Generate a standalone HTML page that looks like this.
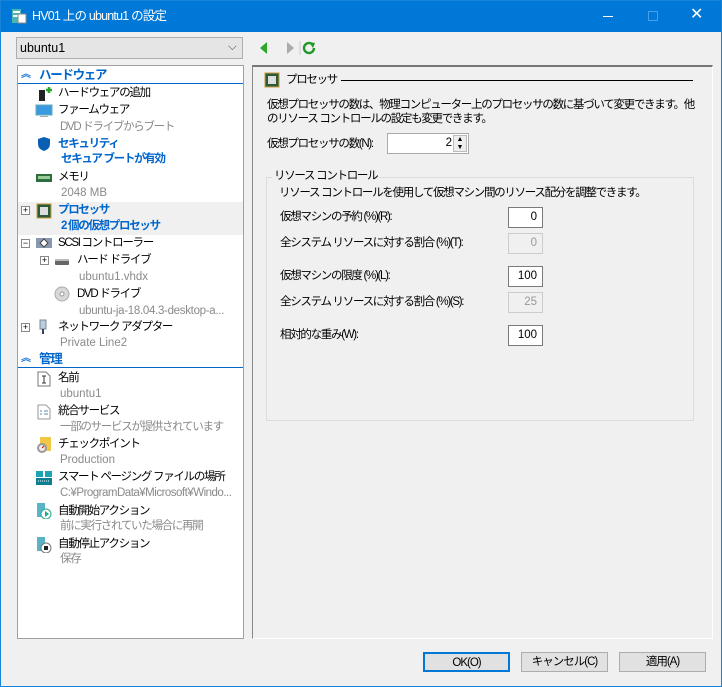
<!DOCTYPE html>
<html><head><meta charset="utf-8"><style>
*{box-sizing:border-box;margin:0;padding:0}
body{width:722px;height:687px;overflow:hidden;background:#fff;font-family:"Liberation Sans","Noto Sans CJK JP",sans-serif;font-size:11.5px;color:#000}
.win{position:absolute;left:0;top:0;width:722px;height:687px;background:#f0f0f0;border:1px solid #1883d7;overflow:hidden}
.tb{position:absolute;left:0;top:0;width:722px;height:31px;background:#0078d7;color:#fff}
.a{position:absolute;white-space:nowrap;line-height:16px;letter-spacing:-1.3px}
.l{letter-spacing:0}
.g{color:#8a8a8a}
.b{color:#0066cc;font-weight:bold}
.box{position:absolute;background:#fff;border:1px solid #7a7a7a;text-align:right;padding-right:5px;line-height:18px}
.dis{background:#f0f0f0;border-color:#ccc;color:#999}
.btn{position:absolute;top:651px;width:87px;height:20px;background:#e1e1e1;border:1px solid #adadad;text-align:center;line-height:18px;letter-spacing:-1px}
.pl{position:absolute;width:9px;height:9px;border:1px solid #888;background:#fff;font-size:9px;line-height:7px;text-align:center;color:#000}
</style></head><body>
<div class="win">
<div class="tb">
 <svg style="position:absolute;left:10px;top:7px" width="16" height="16"><rect x="1" y="1" width="9" height="14" fill="#4ab7b0"/><rect x="2" y="3" width="7" height="2" fill="#fff"/><rect x="2" y="7" width="7" height="2" fill="#fff"/><rect x="7" y="6" width="8" height="9" fill="#fff" stroke="#888"/></svg>
 <div class="a" style="left:31px;top:7px;font-size:12.5px;color:#fff;letter-spacing:-0.8px">HV01 上の ubuntu1 の設定</div>
 <div style="position:absolute;left:602px;top:15px;width:10px;height:1px;background:#fff"></div>
 <div style="position:absolute;left:647px;top:10px;width:10px;height:10px;border:1px solid #4aa0e8"></div>
 <div class="a" style="left:689px;top:6px;font-size:16px;color:#fff;letter-spacing:0">✕</div>
</div>
<div style="position:absolute;left:15px;top:36px;width:227px;height:22px;background:#e5e5e5;border:1px solid #adadad"></div>
<div class="a l" style="left:19px;top:39px;font-size:12.5px">ubuntu1</div>
<div class="a l" style="left:227px;top:38px;color:#555">⌵</div>
<svg style="position:absolute;left:256px;top:40px" width="60" height="14"><path d="M3 7 L10 1 L10 13Z" fill="#2aa82a"/><path d="M30 1 L37 7 L30 13Z" fill="#aaa"/><line x1="43" y1="0" x2="43" y2="14" stroke="#ccc"/><path d="M57 7 A5 5 0 1 1 55 3" fill="none" stroke="#1e9a28" stroke-width="2.4"/><path d="M52 1 L58 2 L56 7Z" fill="#1e9a28"/></svg>

<div style="position:absolute;left:16px;top:64px;width:227px;height:574px;background:#fff;border:1px solid #a0a0a0"></div>
<div style="position:absolute;left:17px;top:201px;width:225px;height:33px;background:#f0f0f0"></div>
<div style="position:absolute;left:17px;top:82px;width:225px;height:1px;background:#0066cc"></div>
<div style="position:absolute;left:17px;top:366px;width:225px;height:1px;background:#0066cc"></div>
<div class="a b" style="left:20px;top:66px;font-size:10px">︽</div><div class="a b" style="left:38px;top:66px;font-size:12.5px">ハードウェア</div>
<svg style="position:absolute;left:37px;top:85px" width="14" height="16"><rect x="1" y="4" width="6" height="11" fill="#222"/><path d="M8 4h6M11 1v6" stroke="#2aa82a" stroke-width="2.5"/></svg>
<div class="a" style="left:57px;top:84px">ハードウェアの追加</div>
<svg style="position:absolute;left:34px;top:103px" width="18" height="14"><rect x="1" y="1" width="16" height="10" fill="#3a9ae0" stroke="#6ab"/><rect x="5" y="12" width="8" height="1" fill="#aaa"/></svg>
<div class="a" style="left:57px;top:101px">ファームウェア</div>
<div class="a g" style="left:59px;top:118px">DVD ドライブからブート</div>
<svg style="position:absolute;left:36px;top:135px" width="14" height="16"><path d="M7 1 L13 3 V8 Q13 13 7 15 Q1 13 1 8 V3Z" fill="#0a5fb4"/></svg>
<div class="a b" style="left:57px;top:135px">セキュリティ</div>
<div class="a b" style="left:60px;top:150px">セキュア ブートが有効</div>
<svg style="position:absolute;left:35px;top:172px" width="16" height="10"><rect x="0" y="1" width="16" height="8" fill="#2e6e3e"/><rect x="2" y="3" width="12" height="3" fill="#9c9"/></svg>
<div class="a" style="left:57px;top:168px">メモリ</div>
<div class="a g l" style="left:60px;top:184px">2048 MB</div>
<div class="pl" style="left:20px;top:205px">+</div>
<svg style="position:absolute;left:35px;top:202px" width="16" height="16"><rect x="1" y="1" width="14" height="14" fill="#2c5a3a" stroke="#c9a13b"/><rect x="4" y="4" width="8" height="8" fill="#ddd"/></svg>
<div class="a b" style="left:57px;top:201px">プロセッサ</div>
<div class="a b" style="left:60px;top:217px">2 個の仮想プロセッサ</div>
<div class="pl" style="left:20px;top:238px">−</div>
<svg style="position:absolute;left:35px;top:235px" width="16" height="14"><rect x="0" y="2" width="16" height="10" fill="#8a99b0"/><path d="M4 7 L8 3 L12 7 L8 11Z" fill="#fff" stroke="#444"/></svg>
<div class="a" style="left:57px;top:234px">SCSI コントローラー</div>
<div class="pl" style="left:39px;top:255px">+</div>
<svg style="position:absolute;left:53px;top:256px" width="16" height="10"><rect x="1" y="2" width="14" height="6" rx="1" fill="#666"/><rect x="1" y="2" width="14" height="2" fill="#bbb"/></svg>
<div class="a" style="left:76px;top:251px">ハード ドライブ</div>
<div class="a g l" style="left:78px;top:268px">ubuntu1.vhdx</div>
<svg style="position:absolute;left:53px;top:285px" width="16" height="16"><circle cx="8" cy="8" r="7" fill="#d8d8d8" stroke="#aaa"/><circle cx="8" cy="8" r="2" fill="#fff" stroke="#999"/></svg>
<div class="a" style="left:76px;top:285px">DVD ドライブ</div>
<div class="a g" style="left:78px;top:302px;letter-spacing:-0.3px">ubuntu-ja-18.04.3-desktop-a...</div>
<div class="pl" style="left:20px;top:322px">+</div>
<svg style="position:absolute;left:37px;top:318px" width="10" height="16"><rect x="2" y="1" width="6" height="9" fill="#bcd" stroke="#789"/><rect x="4" y="10" width="2" height="5" fill="#345"/></svg>
<div class="a" style="left:57px;top:318px">ネットワーク アダプター</div>
<div class="a g l" style="left:59px;top:334px">Private Line2</div>
<div class="a b" style="left:20px;top:350px;font-size:10px">︽</div><div class="a b" style="left:38px;top:350px;font-size:12.5px">管理</div>
<svg style="position:absolute;left:36px;top:370px" width="14" height="16"><path d="M1 1h8l4 4v10H1Z" fill="#fff" stroke="#777"/><path d="M5 5h4M7 5v7M5 12h4" stroke="#333"/></svg>
<div class="a" style="left:57px;top:369px">名前</div>
<div class="a g l" style="left:59px;top:385px">ubuntu1</div>
<svg style="position:absolute;left:36px;top:403px" width="14" height="16"><path d="M1 1h8l4 4v10H1Z" fill="#fff" stroke="#999"/><path d="M3 7h2M3 10h2M7 7h4M7 10h4" stroke="#58a"/></svg>
<div class="a" style="left:57px;top:402px">統合サービス</div>
<div class="a g" style="left:59px;top:418px">一部のサービスが提供されています</div>
<svg style="position:absolute;left:35px;top:436px" width="16" height="16"><rect x="4" y="0" width="11" height="14" fill="#f2c744"/><circle cx="6" cy="11" r="5" fill="#999"/><circle cx="6" cy="11" r="3" fill="#eee"/><path d="M6 11 L8 9" stroke="#c00"/></svg>
<div class="a" style="left:57px;top:435px">チェックポイント</div>
<div class="a g l" style="left:59px;top:451px">Production</div>
<svg style="position:absolute;left:35px;top:469px" width="16" height="16"><rect x="0" y="1" width="7" height="6" fill="#1ca3b8"/><rect x="9" y="1" width="7" height="6" fill="#1ca3b8"/><rect x="0" y="8" width="16" height="7" fill="#0d7f95"/><path d="M2 11h12" stroke="#fff" stroke-dasharray="1 1"/></svg>
<div class="a" style="left:57px;top:468px">スマート ページング ファイルの場所</div>
<div class="a g" style="left:59px;top:484px;letter-spacing:-0.5px">C:¥ProgramData¥Microsoft¥Windo...</div>
<svg style="position:absolute;left:35px;top:502px" width="16" height="16"><rect x="1" y="0" width="8" height="14" fill="#5ab4c8"/><circle cx="10" cy="11" r="5" fill="#fff" stroke="#2a8"/><path d="M9 8 L13 11 L9 14Z" fill="#2a8"/></svg>
<div class="a" style="left:57px;top:502px">自動開始アクション</div>
<div class="a g" style="left:59px;top:517px">前に実行されていた場合に再開</div>
<svg style="position:absolute;left:35px;top:536px" width="16" height="16"><rect x="1" y="0" width="8" height="14" fill="#5ab4c8"/><circle cx="10" cy="11" r="5" fill="#fff" stroke="#777"/><rect x="8" y="9" width="4" height="4" fill="#222"/></svg>
<div class="a" style="left:57px;top:535px">自動停止アクション</div>
<div class="a g" style="left:59px;top:550px">保存</div>

<div style="position:absolute;left:251px;top:64px;width:461px;height:574px;border:1px solid #fff;border-top:2px solid #777;border-left:1px solid #888"></div>
<svg style="position:absolute;left:263px;top:71px" width="16" height="16"><rect x="1" y="1" width="14" height="14" fill="#2c5a3a" stroke="#c9a13b"/><rect x="4" y="4" width="8" height="8" fill="#ddd"/></svg>
<div class="a" style="left:285px;top:71px">プロセッサ</div>
<div style="position:absolute;left:340px;top:79px;width:352px;height:1px;background:#000"></div>
<div class="a" style="left:266px;top:96px">仮想プロセッサの数は、物理コンピューター上のプロセッサの数に基づいて変更できます。他</div>
<div class="a" style="left:266px;top:110px">のリソース コントロールの設定も変更できます。</div>
<div class="a" style="left:266px;top:135px">仮想プロセッサの数(N):</div>
<div class="box" style="left:386px;top:132px;width:82px;height:21px;border-color:#aaa;padding-right:16px">2</div>
<div style="position:absolute;left:452px;top:134px;width:14px;height:17px;background:#eee;border:1px solid #bbb;font-size:7px;line-height:8px;text-align:center">▲<br>▼</div>
<div style="position:absolute;left:265px;top:176px;width:428px;height:244px;border:1px solid #dcdcdc"></div>
<div class="a" style="left:271px;top:167px;background:#f0f0f0;padding:0 2px">リソース コントロール</div>
<div class="a" style="left:278px;top:184px">リソース コントロールを使用して仮想マシン間のリソース配分を調整できます。</div>
<div class="a" style="left:279px;top:208px">仮想マシンの予約 (%)(R):</div>
<div class="box" style="left:507px;top:206px;width:35px;height:21px">0</div>
<div class="a" style="left:279px;top:234px">全システム リソースに対する割合 (%)(T):</div>
<div class="box dis" style="left:507px;top:232px;width:35px;height:21px">0</div>
<div class="a" style="left:279px;top:267px">仮想マシンの限度 (%)(L):</div>
<div class="box" style="left:507px;top:265px;width:35px;height:21px">100</div>
<div class="a" style="left:279px;top:293px">全システム リソースに対する割合 (%)(S):</div>
<div class="box dis" style="left:507px;top:291px;width:35px;height:21px">25</div>
<div class="a" style="left:279px;top:326px">相対的な重み(W):</div>
<div class="box" style="left:507px;top:324px;width:35px;height:21px">100</div>

<div class="btn" style="left:422px;border:2px solid #0078d7">OK(O)</div>
<div class="btn" style="left:520px">キャンセル(C)</div>
<div class="btn" style="left:618px">適用(A)</div>
</div>
</body></html>
